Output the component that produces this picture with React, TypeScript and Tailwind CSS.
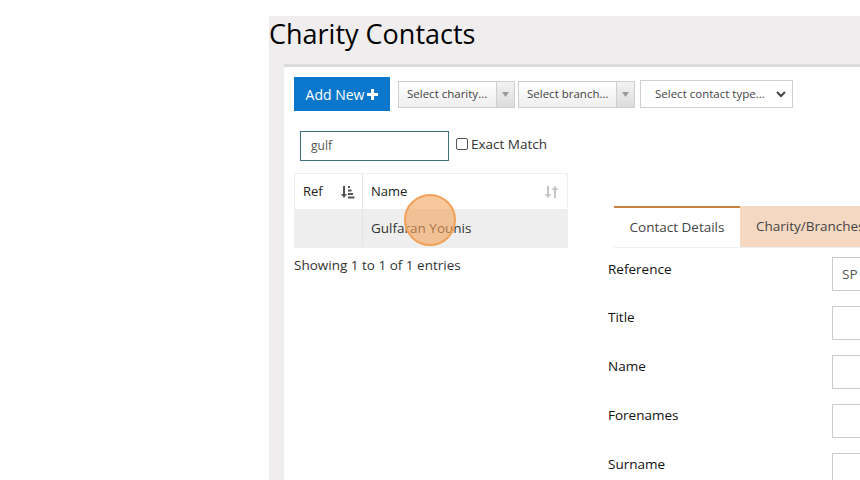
import React from "react"

const font = { fontFamily: "'Open Sans', 'Liberation Sans', sans-serif" }

function Caret() {
  return (
    <svg width="7" height="5" viewBox="0 0 7 5">
      <path d="M0 0h7L3.5 5z" fill="#9a9a9a" />
    </svg>
  )
}

function Combo({ label, w }: { label: string; w: string }) {
  return (
    <div className={`flex h-[27px] ${w} border border-[#cfcfcf] bg-gradient-to-b from-white to-[#eeeeee] text-[11.5px] text-[#444]`}>
      <div className="flex-1 flex items-center pl-2 whitespace-nowrap overflow-hidden">{label}</div>
      <div className="w-[18px] flex items-center justify-center border-l border-[#cfcfcf] bg-gradient-to-b from-[#f2f2f2] to-[#dcdcdc]">
        <Caret />
      </div>
    </div>
  )
}

function SortDown() {
  return (
    <svg width="14" height="14" viewBox="0 0 14 14" fill="#555">
      <path d="M2 1h2v8h2L3 13 0 9h2z" />
      <rect x="7" y="1" width="2" height="2" />
      <rect x="7" y="4.5" width="3.5" height="2" />
      <rect x="7" y="8" width="5" height="2" />
      <rect x="7" y="11.5" width="6.5" height="2" />
    </svg>
  )
}

function SortBoth() {
  return (
    <svg width="13" height="14" viewBox="0 0 13 14" fill="#c4c4c4">
      <path d="M2 1h2v8h2.5L3 13-.5 9H2z" />
      <path d="M9 13h2V5h2.5L10 1 6.5 5H9z" />
    </svg>
  )
}

const fields = ["Reference", "Title", "Name", "Forenames", "Surname"]

export default function App() {
  return (
    <div className="w-[860px] h-[480px] overflow-hidden bg-white pt-4 pl-[269px]" style={font}>
      <div className="h-full bg-[#efeded] flex flex-col">
        <h1 className="shrink-0 text-[27px] leading-[34px] text-black pt-[1px] h-[48px]">Charity Contacts</h1>
        <div className="ml-[15px] flex-1 bg-white border-t-[3px] border-[#dadadf] pl-[10px] pt-[10px]">
          <div className="flex items-center gap-2">
            <button className="h-[34px] w-[96px] bg-[#0a77cc] text-white text-[14px] flex items-center justify-center gap-[3px]">
              Add New
              <svg width="11" height="11" viewBox="0 0 11 11" fill="white">
                <path d="M4 0h3v4h4v3H7v4H4V7H0V4h4z" />
              </svg>
            </button>
            <Combo label="Select charity..." w="w-[117px]" />
            <div className="-ml-[5px]"><Combo label="Select branch..." w="w-[117px]" /></div>
            <div className="h-[28px] w-[153px] -ml-[3px] border border-[#cfcfcf] flex items-center justify-between pl-[14px] pr-[6px] text-[11.5px] text-[#444]">
              <span>Select contact type...</span>
              <svg width="10" height="7" viewBox="0 0 10 7">
                <path d="M1 1l4 4 4-4" stroke="#444" strokeWidth="2" fill="none" />
              </svg>
            </div>
          </div>

          <div className="flex">
            <div className="w-[274px] shrink-0 pt-[20px]">
              <div className="flex items-center pl-[6px]">
                <div className="h-[30px] w-[149px] border border-[#3d6f7c] flex items-center pl-[10px] text-[12px] text-[#555]">gulf</div>
                <div className="ml-[7px] w-[12px] h-[12px] border border-[#555] rounded-[2px] -mt-[4px]" />
                <span className="ml-[3px] text-[13.5px] text-[#333] -mt-[4px]">Exact Match</span>
              </div>
              <div className="mt-[12px] border border-[#efefef]">
                <div className="flex h-[35px] text-[13px] font-medium text-[#222]">
                  <div className="w-[68px] flex items-center justify-between pl-[8px] pr-[7px] border-r border-[#e8e8e8]">
                    <span>Ref</span>
                    <SortDown />
                  </div>
                  <div className="flex-1 flex items-center justify-between pl-[8px] pr-[9px]">
                    <span>Name</span>
                    <SortBoth />
                  </div>
                </div>
                <div className="flex h-[38px] bg-[#eeeeee] text-[13.5px] text-[#333]">
                  <div className="w-[68px] border-r border-[#e4e4e4]" />
                  <div className="relative flex-1 flex items-center pl-[8px]">
                    Gulfaran Younis
                    <div className="absolute left-[41px] top-[-15px] w-[52px] h-[52px] rounded-full bg-[#f4a35c]/60 border-2 border-[#f2a15a]" />
                  </div>
                </div>
              </div>
              <div className="mt-[7px] text-[13.5px] text-[#333]">Showing 1 to 1 of 1 entries</div>
            </div>

            <div className="flex-1 pt-[95px] pl-[40px]">
              <div className="flex ml-[6px] h-[42px] border-b border-[#f0f0f0] text-[13.5px] text-[#444]">
                <div className="w-[126px] shrink-0 border-t-2 border-[#c7843f] flex items-center justify-center">Contact Details</div>
                <div className="flex-1 bg-[#f4d8c2] flex items-center pl-[16px] whitespace-nowrap overflow-hidden">Charity/Branches</div>
              </div>
              {fields.map((f, i) => (
                <div key={f} className="flex h-[49px] items-start">
                  <div className={`w-[224px] shrink-0 text-[13.5px] text-[#111] ${i === 0 ? "pt-[11px]" : "pt-[10px]"}`}>{f}</div>
                  <div className="flex-1 h-[34px] border border-[#cccccc] border-r-0 mt-[9px] flex items-center pl-[9px] text-[13.5px] text-[#555]">
                    {i === 0 ? "SP" : ""}
                  </div>
                </div>
              ))}
            </div>
          </div>
        </div>
      </div>
    </div>
  )
}
